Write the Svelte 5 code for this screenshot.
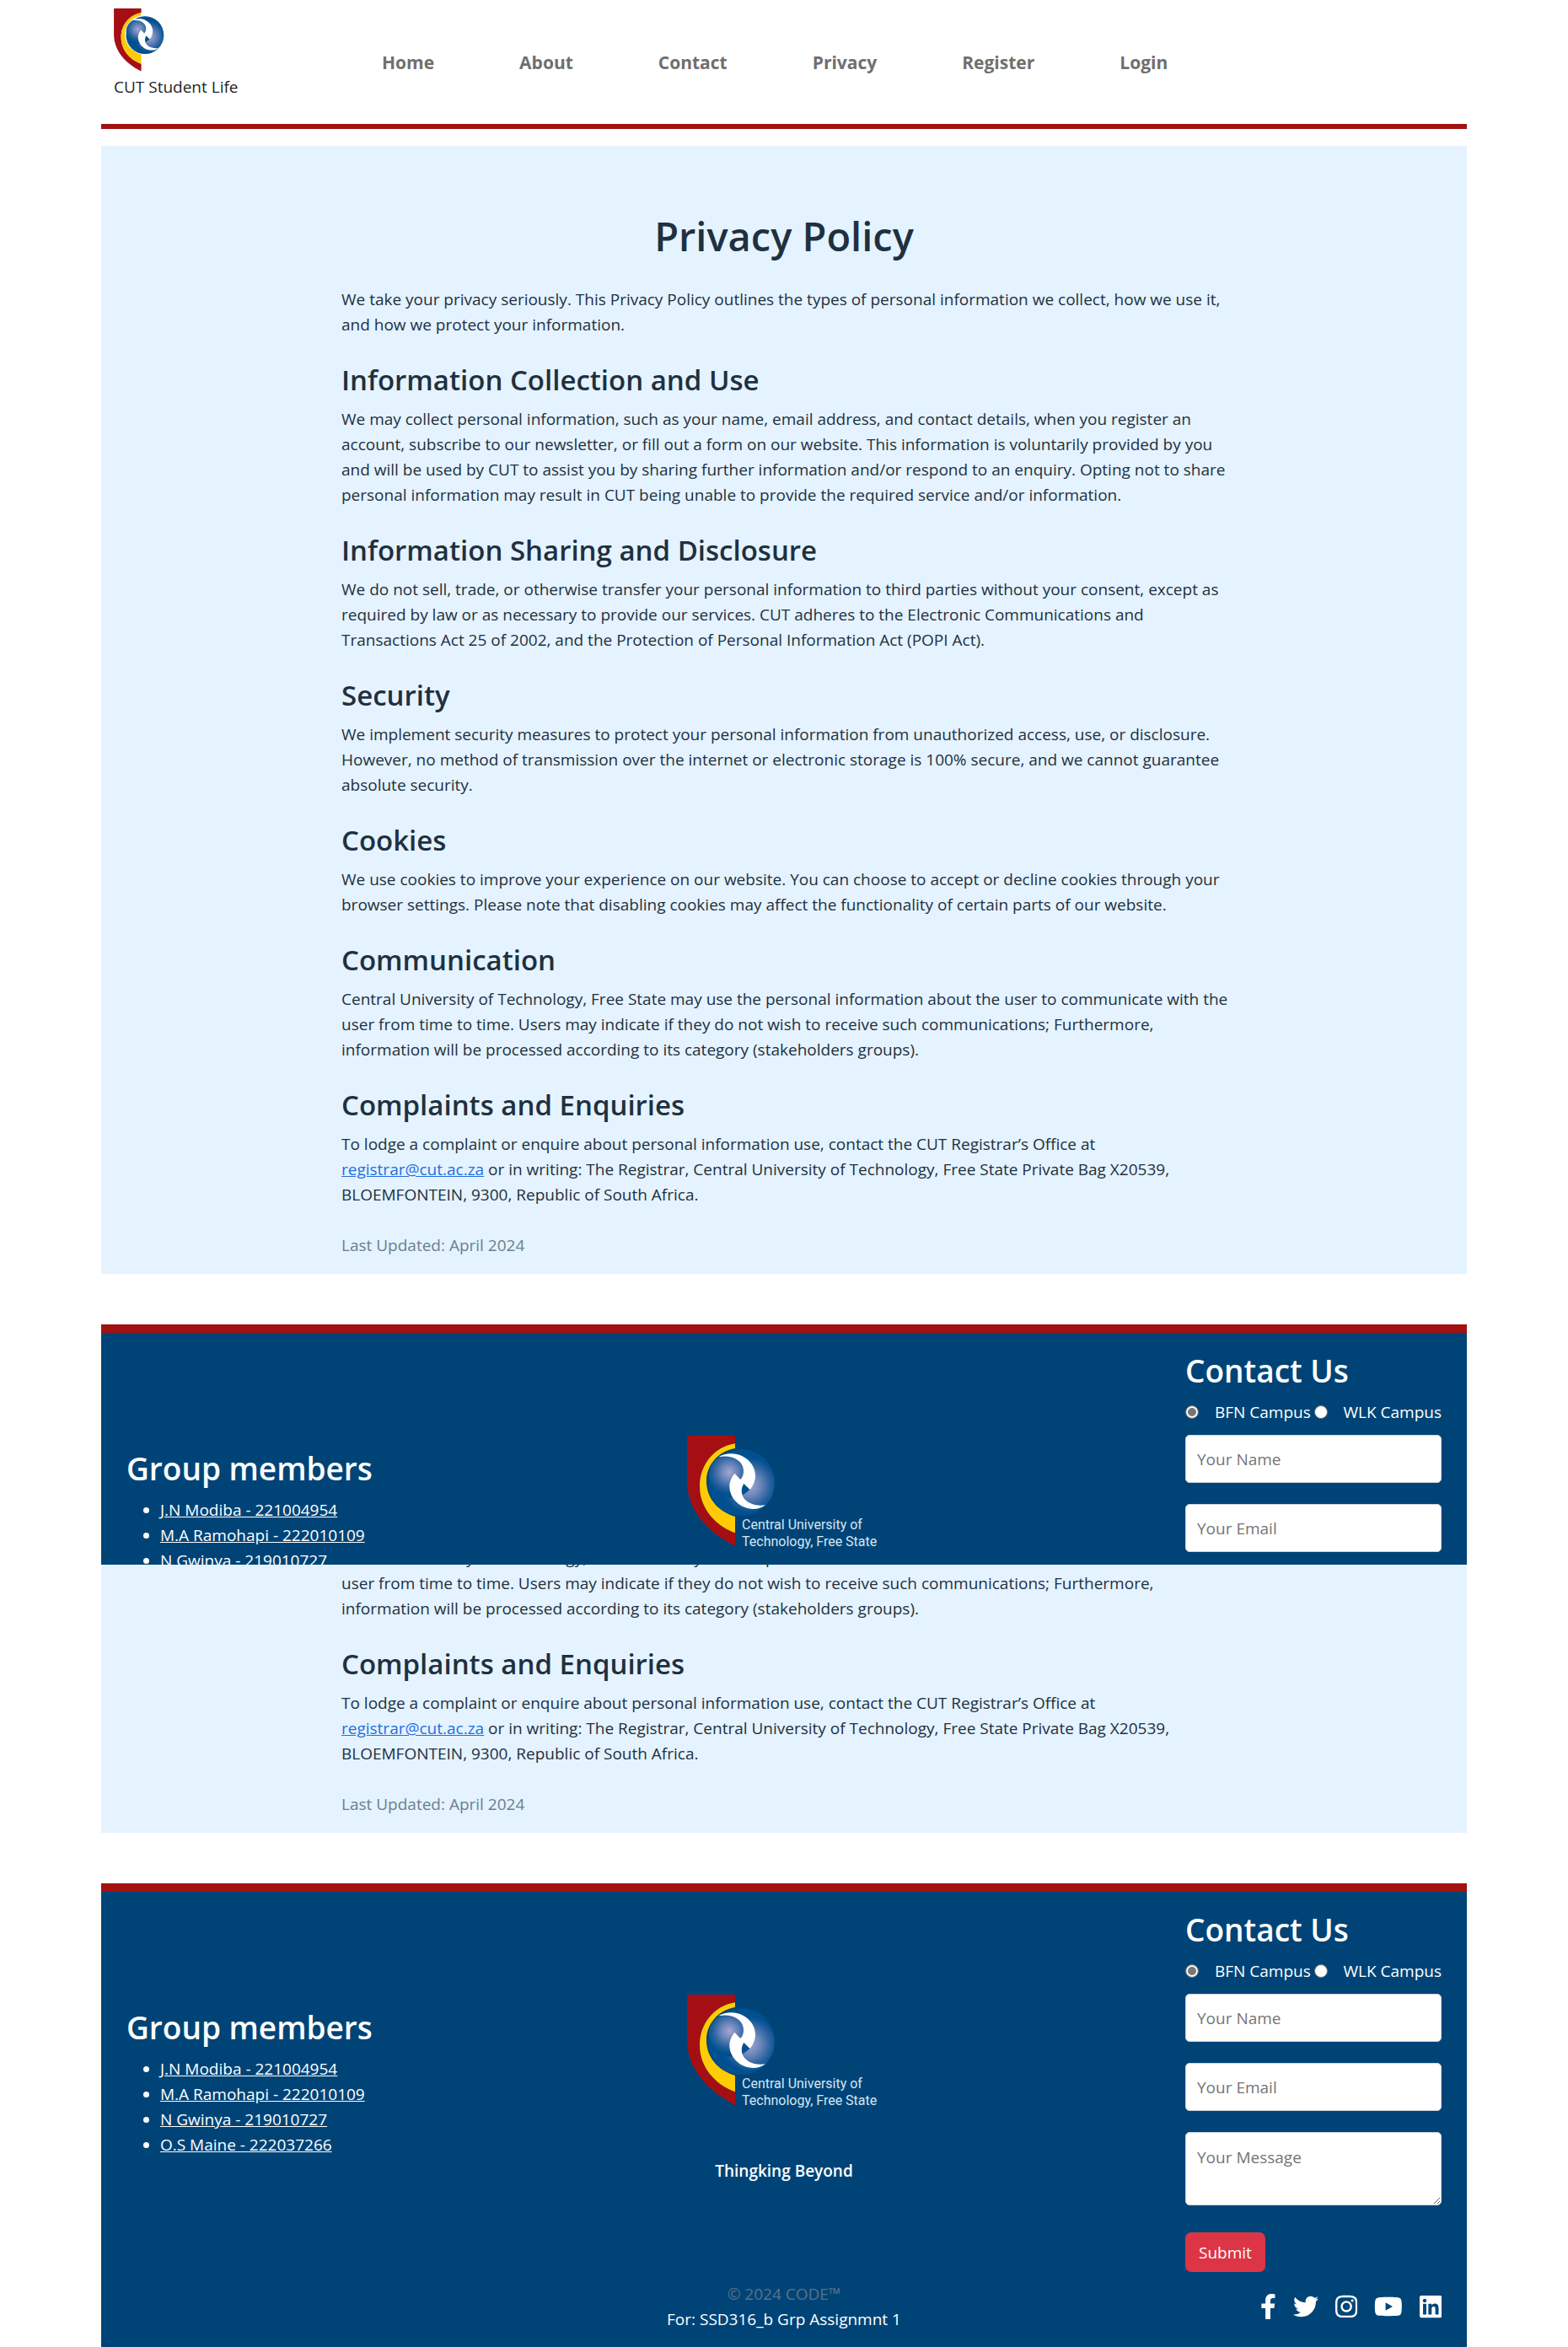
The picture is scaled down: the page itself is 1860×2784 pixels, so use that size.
<script>
  const links = ['Home', 'About', 'Contact', 'Privacy', 'Register', 'Login'];

  const sections = [
    {
      title: 'Information Collection and Use',
      lines: [
        'We may collect personal information, such as your name, email address, and contact details, when you register an',
        'account, subscribe to our newsletter, or fill out a form on our website. This information is voluntarily provided by you',
        'and will be used by CUT to assist you by sharing further information and/or respond to an enquiry. Opting not to share',
        'personal information may result in CUT being unable to provide the required service and/or information.'
      ]
    },
    {
      title: 'Information Sharing and Disclosure',
      lines: [
        'We do not sell, trade, or otherwise transfer your personal information to third parties without your consent, except as',
        'required by law or as necessary to provide our services. CUT adheres to the Electronic Communications and',
        'Transactions Act 25 of 2002, and the Protection of Personal Information Act (POPI Act).'
      ]
    },
    {
      title: 'Security',
      lines: [
        'We implement security measures to protect your personal information from unauthorized access, use, or disclosure.',
        'However, no method of transmission over the internet or electronic storage is 100% secure, and we cannot guarantee',
        'absolute security.'
      ]
    },
    {
      title: 'Cookies',
      lines: [
        'We use cookies to improve your experience on our website. You can choose to accept or decline cookies through your',
        'browser settings. Please note that disabling cookies may affect the functionality of certain parts of our website.'
      ]
    },
    {
      title: 'Communication',
      lines: [
        'Central University of Technology, Free State may use the personal information about the user to communicate with the',
        'user from time to time. Users may indicate if they do not wish to receive such communications; Furthermore,',
        'information will be processed according to its category (stakeholders groups).'
      ]
    }
  ];

  const members = [
    'J.N Modiba - 221004954',
    'M.A Ramohapi - 222010109',
    'N Gwinya - 219010727',
    'O.S Maine - 222037266'
  ];

  const socials = [
    { name: 'Facebook', w: 320, d: 'M279.14 288l14.22-92.66h-88.91v-60.13c0-25.35 12.42-50.06 52.24-50.06h40.42V6.26S260.43 0 225.36 0c-73.22 0-121.08 44.38-121.08 124.72v70.62H22.89V288h81.39v224h100.17V288z' },
    { name: 'Twitter', w: 512, d: 'M459.37 151.716c.325 4.548.325 9.097.325 13.645 0 138.72-105.583 298.558-298.558 298.558-59.452 0-114.68-17.219-161.137-47.106 8.447.974 16.568 1.299 25.34 1.299 49.055 0 94.213-16.568 130.274-44.832-46.132-.975-84.792-31.188-98.112-72.772 6.498.974 12.995 1.624 19.818 1.624 9.421 0 18.843-1.3 27.614-3.573-48.081-9.747-84.143-51.98-84.143-102.985v-1.299c13.969 7.797 30.214 12.67 47.431 13.319-28.264-18.843-46.781-51.005-46.781-87.391 0-19.492 5.197-37.36 14.294-52.954 51.655 63.675 129.3 105.258 216.365 109.807-1.624-7.797-2.599-15.918-2.599-24.04 0-57.828 46.782-104.934 104.934-104.934 30.213 0 57.502 12.67 76.67 33.137 23.715-4.548 46.456-13.32 66.599-25.34-7.798 24.366-24.366 44.833-46.132 57.827 21.117-2.273 41.584-8.122 60.426-16.243-14.292 20.791-32.161 39.308-52.628 54.253z' },
    { name: 'Instagram', w: 448, d: 'M224.1 141c-63.6 0-114.9 51.3-114.9 114.9s51.3 114.9 114.9 114.9S339 319.5 339 255.900 287.700 141 224.100 141zm0 189.600c-41.100 0-74.700-33.500-74.700-74.700s33.500-74.700 74.700-74.700 74.700 33.500 74.700 74.700-33.600 74.700-74.700 74.700zm146.400-194.300c0 14.900-12 26.800-26.800 26.800-14.900 0-26.800-12-26.800-26.800s12-26.800 26.800-26.800 26.800 12 26.800 26.800zm76.100 27.200c-1.700-35.900-9.900-67.700-36.200-93.900-26.200-26.200-58-34.400-93.900-36.200-37-2.100-147.900-2.100-184.900 0-35.800 1.700-67.600 9.900-93.900 36.100s-34.400 58-36.200 93.900c-2.100 37-2.100 147.900 0 184.900 1.700 35.900 9.900 67.700 36.200 93.900s58 34.400 93.900 36.200c37 2.100 147.900 2.100 184.900 0 35.900-1.700 67.700-9.900 93.900-36.200 26.200-26.200 34.400-58 36.200-93.900 2.100-37 2.100-147.800 0-184.800zM398.800 388c-7.800 19.600-22.900 34.700-42.600 42.600-29.500 11.700-99.500 9-132.100 9s-102.700 2.600-132.100-9c-19.600-7.800-34.700-22.900-42.600-42.600-11.700-29.500-9-99.500-9-132.100s-2.600-102.700 9-132.100c7.800-19.600 22.900-34.700 42.600-42.600 29.500-11.700 99.500-9 132.100-9s102.700-2.600 132.100 9c19.600 7.800 34.700 22.900 42.600 42.600 11.700 29.500 9 99.500 9 132.100s2.700 102.700-9 132.100z' },
    { name: 'YouTube', w: 576, d: 'M549.655 124.083c-6.281-23.65-24.787-42.276-48.284-48.597C458.781 64 288 64 288 64S117.220 64 74.629 75.486c-23.497 6.322-42.003 24.947-48.284 48.597-11.412 42.867-11.412 132.305-11.412 132.305s0 89.438 11.412 132.305c6.281 23.650 24.787 41.500 48.284 47.821C117.220 448 288 448 288 448s170.780 0 213.371-11.486c23.497-6.321 42.003-24.171 48.284-47.821 11.412-42.867 11.412-132.305 11.412-132.305s0-89.438-11.412-132.305zm-317.510 213.508V175.185l142.739 81.205-142.739 81.201z' },
    { name: 'LinkedIn', w: 448, d: 'M416 32H31.900C14.300 32 0 46.500 0 64.300v383.400C0 465.500 14.300 480 31.900 480H416c17.600 0 32-14.500 32-32.300V64.300c0-17.800-14.400-32.300-32-32.300zM135.400 416H69V202.200h66.500V416zm-33.200-243c-21.300 0-38.500-17.300-38.500-38.500S80.900 96 102.200 96c21.200 0 38.500 17.300 38.500 38.500 0 21.300-17.200 38.500-38.500 38.500zm282.100 243h-66.400V312c0-24.800-.5-56.700-34.500-56.700-34.600 0-39.900 27-39.900 54.900V416h-66.400V202.200h63.700v29.200h.9c8.900-16.800 30.600-34.500 62.900-34.500 67.200 0 79.700 44.300 79.700 101.900V416z' }
  ];
</script>

{#snippet emblem(id)}
  <defs>
    <radialGradient id="globe-{id}" gradientUnits="userSpaceOnUse" cx="222" cy="176" r="98">
      <stop offset="0" stop-color="#a3a8d3" />
      <stop offset="0.4" stop-color="#6c86ba" />
      <stop offset="0.75" stop-color="#2a639f" />
      <stop offset="1" stop-color="#00508f" />
    </radialGradient>
    <radialGradient id="inner-{id}" gradientUnits="userSpaceOnUse" cx="150" cy="130" r="80">
      <stop offset="0" stop-color="#a3a8d3" />
      <stop offset="0.35" stop-color="#6c86ba" />
      <stop offset="0.7" stop-color="#2a639f" />
      <stop offset="1" stop-color="#00508f" />
    </radialGradient>
  </defs>
  <path fill="#a50f14" d="M0 0H171V28C95 40 45 105 45 180C45 260 100 320 171 346V393C60 335 0 255 0 160Z" />
  <path fill="#ffcb05" d="M171 28C95 40 45 105 45 180C45 258 100 320 171 346V288C110 270 69 222 69 162C69 100 115 55 171 45Z" />
  <circle cx="194" cy="167" r="118" fill="url(#globe-{id})" />
  <circle cx="155" cy="143" r="78" fill="url(#inner-{id})" />
  <path fill="#00508f" d="M202 171L224 192L197 212Q194 190 202 171Z" />
  <path fill="#fff" d="M112 76C132 63 168 59 195 72C225 87 243 112 243 143C243 161 235 178 224 192L202 171C194 183 192 197 197 212C206 236 238 253 279 247C262 260 240 264 218 259C178 250 151 216 151 180C151 163 159 147 169 134L190 156C199 147 203 132 200 116C193 86 158 67 112 76Z" />
{/snippet}

{#snippet bar(id)}
  <header class="top">
    <a class="brand" href="#home">
      <svg class="mark" viewBox="0 0 315 395" aria-hidden="true">{@render emblem(id)}</svg>
      <span>CUT Student Life</span>
    </a>
    <nav>
      {#each links as link}
        <a href="#{link.toLowerCase()}">{link}</a>
      {/each}
    </nav>
  </header>
{/snippet}

{#snippet body(lines)}
  <p>{#each lines as line, i}{#if i}<br />{/if}{line}{/each}</p>
{/snippet}

{#snippet closing()}
  <h2>Complaints and Enquiries</h2>
  <p>To lodge a complaint or enquire about personal information use, contact the CUT Registrar’s Office at<br /><a href="mailto:registrar@cut.ac.za">registrar@cut.ac.za</a> or in writing: The Registrar, Central University of Technology, Free State Private Bag X20539,<br />BLOEMFONTEIN, 9300, Republic of South Africa.</p>
  <p class="updated">Last Updated: April 2024</p>
{/snippet}

{#snippet foot(id, whole)}
  <footer>
    <section class="members">
      <h3>Group members</h3>
      <ul>
        {#each whole ? members : members.slice(0, 3) as member}
          <li><a href="#members">{member}</a></li>
        {/each}
      </ul>
    </section>

    <section class="motto">
      <svg class="crest" viewBox="0 0 230 136" role="img" aria-label="Central University of Technology, Free State">
        <g transform="scale(0.3333)">{@render emblem(id)}</g>
        <text x="65" y="111">Central University of</text>
        <text x="65" y="131">Technology, Free State</text>
      </svg>
      {#if whole}<strong>Thingking Beyond</strong>{/if}
    </section>

    <form class="contact" onsubmit={(e) => e.preventDefault()}>
      <h3>Contact Us</h3>
      <div class="campus">
        <label><input type="radio" name="campus-{id}" value="bfn" checked />BFN Campus</label>
        <label><input type="radio" name="campus-{id}" value="wlk" />WLK Campus</label>
      </div>
      <div class="fields">
        <input type="text" placeholder="Your Name" aria-label="Your Name" />
        <input type="email" placeholder="Your Email" aria-label="Your Email" />
        {#if whole}<textarea placeholder="Your Message" aria-label="Your Message"></textarea>{/if}
      </div>
      {#if whole}<button type="submit">Submit</button>{/if}
    </form>

    {#if whole}
      <div class="copy">
        <span>© 2024 CODE™</span><br />For: SSD316_b Grp Assignmnt 1
      </div>
      <div class="social">
        {#each socials as s}
          <a href="#{s.name.toLowerCase()}" aria-label={s.name}>
            <svg viewBox="0 0 {s.w} 512" aria-hidden="true"><path d={s.d} /></svg>
          </a>
        {/each}
      </div>
    {/if}
  </footer>
{/snippet}

<!-- Upper view: the page from its top, its footer running out of sight -->
<div class="view first">
  <div class="page">
    {@render bar('head')}
    <main>
      <article>
        <h1>Privacy Policy</h1>
        <p>We take your privacy seriously. This Privacy Policy outlines the types of personal information we collect, how we use it,<br />and how we protect your information.</p>
        {#each sections as section}
          <h2>{section.title}</h2>
          {@render body(section.lines)}
        {/each}
        {@render closing()}
      </article>
    </main>
    {@render foot('upper', false)}
  </div>
</div>

<!-- Lower view: the end of the page, scrolled to the bottom -->
<div class="view last">
  <div class="page">
    <main>
      <article>
        {@render body(sections[4].lines)}
        {@render closing()}
      </article>
    </main>
    {@render foot('lower', true)}
  </div>
</div>

<style>
  :global(body) {
    margin: 0;
    background: #fff;
    color: #212529;
    font: 19px/30px 'Open Sans', 'Noto Sans', sans-serif;
  }
  * { box-sizing: border-box; }
  h1, h2, h3, p, ul { margin: 0; }

  .view {
    display: flex;
    flex-direction: column;
    overflow: hidden;
  }
  .first { height: 1856px; }
  .last { height: 928px; justify-content: flex-end; }

  .page {
    flex: none;
    width: 100%;
    max-width: 1620px;
    margin: 0 auto;
  }

  .top {
    display: flex;
    align-items: center;
    min-height: 153px;
    padding: 0 15px;
    border-bottom: 6px solid #a01214;
    margin-bottom: 20px;
  }
  .brand {
    display: flex;
    flex-direction: column;
    gap: 3px;
    width: 318px;
    align-self: flex-start;
    padding-top: 10px;
    color: #212529;
    text-decoration: none;
  }
  .mark { width: 60px; height: 75px; }
  nav { display: flex; gap: 101px; }
  nav a {
    color: #6f6f6f;
    font-size: 21px;
    font-weight: 700;
    text-decoration: none;
  }

  main {
    background: #e4f3ff;
    color: #1f3040;
    padding: 77px 15px 19px;
  }
  article { max-width: 1050px; margin: 0 auto; white-space: nowrap; }
  h1, h2, h3 { font-weight: 600; }
  h1 {
    font-size: 47px;
    line-height: 60px;
    margin-bottom: 30px;
    text-align: center;
  }
  h2 {
    font-size: 33px;
    line-height: 42px;
    margin: 30px 0 10px;
  }
  article a { color: #1f6fe0; }
  .updated { margin-top: 30px; color: #6b7f8e; }

  footer {
    display: grid;
    grid-template-columns: 1fr auto 1fr;
    align-items: center;
    row-gap: 11px;
    margin-top: 60px;
    padding: 21px 30px 18px;
    border-top: 10px solid #a31210;
    background: #004477;
    color: #fff;
  }
  h3 { font-size: 37px; line-height: 48px; margin-bottom: 10px; }
  .members { min-height: 198px; }
  ul { padding-left: 40px; }
  footer li a { color: #fff; }

  .motto {
    display: flex;
    flex-direction: column;
    align-items: center;
    gap: 58px;
    min-height: 228px;
  }
  .crest { width: 230px; height: 136px; }
  .crest text {
    fill: #d5e6f4;
    font-family: Roboto, sans-serif;
    font-size: 16px;
  }
  strong { font-weight: 600; }

  .contact { justify-self: end; width: 304px; min-height: 430px; }
  .campus { display: flex; justify-content: space-between; white-space: nowrap; margin-bottom: 12px; }
  .campus label { display: flex; align-items: center; }
  .campus input {
    appearance: none;
    width: 16px;
    height: 16px;
    margin: 0 19px 0 0;
    border: 1px solid #767676;
    border-radius: 50%;
    background: #fff;
  }
  .campus input:checked {
    background: #767676;
    box-shadow: inset 0 0 0 2px #fff;
  }
  .fields { display: grid; gap: 25px; }
  .fields input, textarea {
    display: block;
    width: 100%;
    height: 57px;
    padding: 12px 13px;
    border: 1px solid #ced4da;
    border-radius: 5px;
    background: #fff;
    color: #212529;
    font: inherit;
  }
  textarea { height: 87px; padding-top: 14px; resize: vertical; }
  ::placeholder { color: #757575; opacity: 1; }
  button {
    display: block;
    height: 47px;
    margin-top: 32px;
    padding: 0 16px;
    border: 0;
    border-radius: 7px;
    background: #dc3545;
    color: #fff;
    font: inherit;
  }

  .copy { grid-column: 2; text-align: center; justify-self: center; }
  .copy span { color: #5b7186; }
  .social { display: flex; gap: 20px; justify-self: end; }
  .social a { display: block; height: 30px; }
  .social svg { display: block; height: 30px; fill: #fff; }
</style>
